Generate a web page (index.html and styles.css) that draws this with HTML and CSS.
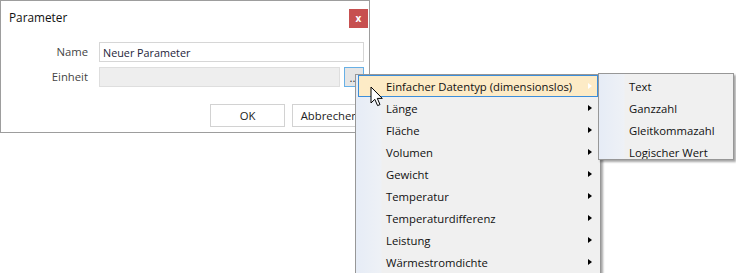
FILE: index.html
```html
<!DOCTYPE html>
<html lang="de">
<head>
    <meta charset="utf-8">
    <title>Parameter</title>
    <link rel="stylesheet" href="styles.css">
</head>
<body>
<div class="dialog">
    <div class="titlebar">
        <span class="title">Parameter</span>
        <button class="close">x</button>
    </div>
    <div class="form">
        <label>Name</label>
        <div class="field"><input type="text" value="Neuer Parameter"></div>
        <label>Einheit</label>
        <div class="field">
            <input type="text" class="disabled" disabled>
            <button class="browse">...</button>
        </div>
    </div>
    <div class="actions">
        <button class="btn">OK</button>
        <button class="btn">Abbrechen</button>
    </div>
</div>

<!-- context menu -->
<div class="menu">
    <div class="item active">Einfacher Datentyp (dimensionslos)<span class="arrow"></span></div>
    <div class="item">Länge<span class="arrow"></span></div>
    <div class="item">Fläche<span class="arrow"></span></div>
    <div class="item">Volumen<span class="arrow"></span></div>
    <div class="item">Gewicht<span class="arrow"></span></div>
    <div class="item">Temperatur<span class="arrow"></span></div>
    <div class="item">Temperaturdifferenz<span class="arrow"></span></div>
    <div class="item">Leistung<span class="arrow"></span></div>
    <div class="item">Wärmestromdichte<span class="arrow"></span></div>
</div>

<div class="menu submenu">
    <div class="item">Text</div>
    <div class="item">Ganzzahl</div>
    <div class="item">Gleitkommazahl</div>
    <div class="item">Logischer Wert</div>
</div>

<svg class="cursor" width="14" height="21" viewBox="0 0 14 21">
    <path d="M1 1 L1 17 L4.8 13.3 L7.6 19.6 L10 18.6 L7.3 12.4 L12.3 12.4 Z" fill="#fff" stroke="#000" stroke-width="1" stroke-linejoin="miter"/>
</svg>
</body>
</html>
```

FILE: styles.css
```css
body { margin: 0; background: #fff; font-family: "Segoe UI", "Open Sans", sans-serif; font-size: 11.3px; color: #1a1a1a; position: relative; width: 736px; height: 273px; overflow: hidden; }
button { font-family: inherit; font-size: 11.3px; }

.dialog { width: 370px; height: 133px; box-sizing: border-box; border: 1px solid #9d9d9d; background: #fff; }
.titlebar { display: flex; justify-content: space-between; align-items: center; height: 32px; padding: 0 1px 0 8px; }
.title { font-size: 11.8px; color: #111; margin-top: -1px; }
.close { width: 19px; height: 19px; margin-top: 2px; border: none; background: #c75050; color: #fff; font-weight: bold; font-size: 10px; padding: 0; line-height: 17px; }

.form { display: grid; grid-template-columns: 87px 265px; column-gap: 11px; row-gap: 5px; margin-top: 9px; }
.form label { text-align: right; color: #444; line-height: 20px; }
.field { display: flex; gap: 4px; }
.field input { flex: 1; height: 20px; box-sizing: border-box; border: 1px solid #d6d6d6; padding: 0 3px; font-family: inherit; font-size: 10.8px; color: #1e1e3a; background: #fff; margin: 0; }
.field input.disabled { background: #eeeeee; border-color: #dedede; }
.browse { width: 20px; height: 20px; box-sizing: border-box; border: 1px solid #67b0e6; background: #e5e5e5; padding: 0; color: #333; line-height: 20px; }

.actions { display: flex; gap: 7px; margin: 17px 0 0 209px; }
.btn { width: 75px; height: 23px; box-sizing: border-box; border: 1px solid #d2d2d2; background: #fff; color: #222; padding: 0; }

.menu { position: absolute; left: 355px; top: 74px; width: 246px; box-sizing: border-box; border: 1px solid #979797; padding: 0 2px; background: linear-gradient(to right, #e6ecf6 0, #eef1f6 25px, #f0f0f0 26px); box-shadow: 2px 2px 2px rgba(0,0,0,0.35); }
.item { position: relative; height: 22px; line-height: 21px; padding-left: 27px; box-sizing: border-box; border: 1px solid transparent; color: #111; }
.item.active { background: #fdebc6; border-color: #3b8edb; }
.arrow { position: absolute; right: 5px; top: 7px; width: 0; height: 0; border-top: 3.5px solid transparent; border-bottom: 3.5px solid transparent; border-left: 4px solid #000; }
.item.active .arrow { border-left-color: #fff; }

.submenu { left: 598px; top: 73px; width: 136px; height: 87px; padding-top: 1px; overflow: hidden; }

.cursor { position: absolute; left: 370px; top: 86px; }
```
